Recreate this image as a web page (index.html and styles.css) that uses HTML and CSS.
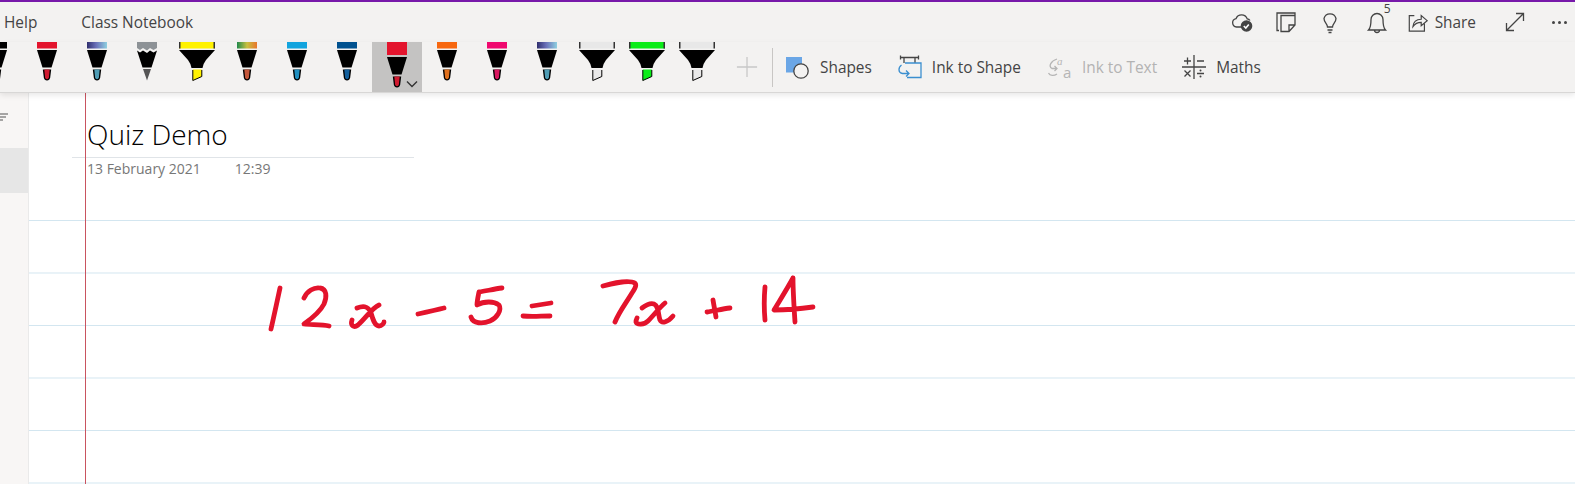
FILE: index.html
```html
<!DOCTYPE html>
<html>
<head>
	<meta charset="utf-8">
	<title>Quiz Demo - OneNote</title>
	<link rel="stylesheet" href="styles.css">
</head>
<body>
	<svg class="defs" width="0" height="0">
		<defs>
			<linearGradient id="grad-galaxy"><stop offset="0" stop-color="#2f2f6e"/><stop offset="0.45" stop-color="#6a6fb8"/><stop offset="1" stop-color="#8fd0e0"/></linearGradient>
			<linearGradient id="grad-rainbow"><stop offset="0" stop-color="#1f8a4c"/><stop offset="0.5" stop-color="#c8c040"/><stop offset="1" stop-color="#e8762c"/></linearGradient>
			<symbol id="pen" viewBox="0 0 50 50">
				<rect class="cap" x="15" y="0" width="20" height="6.5"/>
				<path d="M15 8H35L29.5 25.5H20.5Z"/>
				<path d="M20.8 27.5H29.2L28.2 35.5Q27.6 38.500 25 38.500T21.800 35.500Z"/>
				<path class="tip" d="M22.300 27.500H27.700L26.900 35.500Q26.500 37.200 25 37.200T23.100 35.500Z"/>
			</symbol>
			<symbol id="pen-big" viewBox="0 0 50 50">
				<rect class="cap" x="15" y="0" width="20" height="13"/>
				<path d="M15 15H35L29.5 32.5H20.5Z"/>
				<path d="M20.8 34.5H29.2L28.2 42.5Q27.6 45.5 25 45.5T21.8 42.5Z"/>
				<path class="tip" d="M22.300 34.500H27.700L26.900 42.500Q26.500 44.200 25 44.200T23.100 42.500Z"/>
			</symbol>
			<symbol id="marker" viewBox="0 0 50 50">
				<rect class="cap" x="7" y="0" width="36" height="6.5"/>
				<path fill="#333" d="M7 0h1.500v6.500H7zM41.500 0H43v6.500h-1.500z"/>
				<path d="M7 8H43L34 18Q31 22 30.500 26H19.500Q19 22 16 18Z"/>
				<path class="tip" d="M20.800 27.500H29.800V34.500L20.800 38.500Z"/>
				<path fill="none" stroke="#000" stroke-width="1" d="M20.800 28V38.500L29.800 34.500V28"/>
			</symbol>
			<symbol id="pencil" viewBox="0 0 50 50">
				<path fill="#8d9296" d="M15 0H35V6L31.500 8 28 6 25 8.500 21 6 18 8 15 6Z"/>
				<path d="M15 8.500L18 10.500 21 8.500 25 11 28 8.500 31.500 10.500 35 8.500 29.500 25.500H20.500Z"/>
				<path fill="#555" d="M21 27H29L25 38.500Z"/>
			</symbol>
		</defs>
	</svg>

	<div class="app">
		<div class="topbar">
			<span class="tab tab-help">Help</span>
			<span class="tab tab-class">Class Notebook</span>
			<div class="actions">
				<svg class="act act-cloud" viewBox="0 0 24 24"><path class="ln" d="M12 17H6.500A4.200 4.200 0 0 1 6 8.700 6 6 0 0 1 17.200 8.800 3.600 3.600 0 0 1 20 10.500"/><circle class="dk" cx="16.500" cy="16" r="5.800"/><path class="wt" d="M13.800 16l2 2 3-3.500"/></svg>
				<svg class="act act-note" viewBox="0 0 24 24"><path class="ln" d="M5 20.500H3V3H21V5M7 5.500H21V15L15 21.500H7ZM21 15H15V21.500"/></svg>
				<svg class="act act-bulb" viewBox="0 0 24 24"><path class="ln" d="M9.500 17C9.500 13.500 6 12.500 6 8.500A6.200 6.200 0 0 1 18 8.500C18 12.500 14.500 13.500 14.500 17ZM9.500 20H14.500M10.500 22.500H13.500"/></svg>
				<div class="act act-bell">
					<svg viewBox="0 0 24 24"><path class="ln" d="M3.500 20H20.500C18.500 18 18 15 18 9.500A6 6 0 0 0 6 9.500C6 15 5.500 18 3.500 20ZM9.500 20A2.500 2.500 0 0 0 14.500 20"/></svg>
					<span class="badge">5</span>
				</div>
				<div class="share">
					<svg viewBox="0 0 24 24"><path class="ln" d="M8 5H2.500V22H19V14M6.500 17C7 11.500 10.500 9 15.500 9V5L22 10.500 15.500 16V12.500C12 12.500 9 13.500 6.500 17Z"/></svg>
					<span>Share</span>
				</div>
				<svg class="act act-expand" viewBox="0 0 24 24"><path class="ln" d="M4 20L20 4M13 3.500H20.500V11M3.500 13V20.500H11"/></svg>
				<div class="dots"><i></i><i></i><i></i></div>
			</div>
		</div>

		<div class="ribbon">
			<div class="pens">
				<div class="pen pen-black"><svg><use href="#pen"/></svg></div>
				<div class="pen pen-red"><svg><use href="#pen"/></svg></div>
				<div class="pen pen-galaxy"><svg><use href="#pen"/></svg></div>
				<div class="pen"><svg><use href="#pencil"/></svg></div>
				<div class="pen pen-yellow"><svg><use href="#marker"/></svg></div>
				<div class="pen pen-rainbow"><svg><use href="#pen"/></svg></div>
				<div class="pen pen-sky"><svg><use href="#pen"/></svg></div>
				<div class="pen pen-navy"><svg><use href="#pen"/></svg></div>
				<div class="pen pen-red selected">
					<svg><use href="#pen-big"/></svg>
					<svg class="chevron" viewBox="0 0 12 8"><path d="M1 1.500L6 6.500 11 1.500"/></svg>
				</div>
				<div class="pen pen-orange"><svg><use href="#pen"/></svg></div>
				<div class="pen pen-pink"><svg><use href="#pen"/></svg></div>
				<div class="pen pen-galaxy"><svg><use href="#pen"/></svg></div>
				<div class="pen pen-pale"><svg><use href="#marker"/></svg></div>
				<div class="pen pen-green"><svg><use href="#marker"/></svg></div>
				<div class="pen pen-pale"><svg><use href="#marker"/></svg></div>
			</div>
			<div class="add"><svg viewBox="0 0 24 24"><path d="M12 1V23M1 12H23"/></svg></div>
			<div class="sep"></div>
			<div class="tool tool-shapes">
				<svg viewBox="0 0 24 24"><rect x="0" y="2" width="16" height="15.500" fill="#6aa6e6"/><circle class="disc" cx="15" cy="16" r="7.200"/></svg>
				<span>Shapes</span>
			</div>
			<div class="tool tool-ink">
				<svg viewBox="0 0 24 24"><path class="ln" d="M3 2.500H20M2.500 0.500V4.500M20.500 0.500V4.500M6 3V8M17 3V8"/><path class="bl" d="M7 8H23V22.500H9M3.500 10C0 12.500 0 18 4.500 18.500H11M8 15.500L11 18.500 8 21.500"/></svg>
				<span>Ink to Shape</span>
			</div>
			<div class="tool tool-off">
				<svg viewBox="0 0 24 24"><text class="a-top" x="9" y="10">a</text><text class="a-low" x="15" y="23">a</text><path class="gr" d="M9 4C3 6 0 11 4 13.500H9M6.500 11L9 13.500 6.500 16"/><path class="gr" d="M0.500 18C2 21 6 21 9 19"/></svg>
				<span>Ink to Text</span>
			</div>
			<div class="tool tool-maths">
				<svg viewBox="0 0 24 24"><path class="ln" d="M12 0V24M0 12H24M2 6H9M5.500 2.500V9.500M15 6H22M2.500 15.500L8.500 21.500M8.500 15.500L2.500 21.500M15 18.500H22"/><circle cx="18.500" cy="15.500" r="1" fill="#444"/><circle cx="18.500" cy="21.500" r="1" fill="#444"/></svg>
				<span>Maths</span>
			</div>
		</div>

		<div class="main">
			<div class="side">
				<svg class="sort" viewBox="0 0 10 9"><path d="M0 1H8M0 4H6M0 7H3"/></svg>
				<div class="side-item"></div>
			</div>
			<div class="page">
				<div class="page-head">
					<h1>Quiz Demo</h1>
					<div class="meta"><span>13 February 2021</span><span>12:39</span></div>
				</div>
				<div class="ruled"></div>
				<div class="margin-line"></div>
				<svg class="ink" viewBox="29 92 900 300">
					<path d="M280 288C277 302 274 316 271 329"/>
					<path d="M304 298C307 291 314 287 320 288 327 289 327 297 324 304 320 312 311 319 304 324 310 325 322 324 329 326"/>
					<path d="M357 308C362 306 368 305 371 313 373 320 375 326 379 326 382 326 384 323 384 322M379 305C372 308 366 318 358 325 354 328 350 326 352 320"/>
					<path d="M418 314C427 312 436 310 444 308"/>
					<path d="M502 288C494 289 486 291 479 292 478 297 477 301 477 305 484 301 494 301 499 305 502 310 497 318 490 321 483 324 473 324 471 317"/>
					<path d="M532 306C538 305 545 304 551 303M523 316C532 317 541 316 550 316"/>
					<path d="M603 286C613 283 626 281 632 282 638 283 636 287 632 293 626 303 619 312 615 322"/>
					<path d="M642 308C646 305 651 303 654 304 659 306 658 315 660 320 662 324 668 322 673 316M665 303C660 307 654 315 648 321 644 325 637 325 636 322 636 320 637 318 637 318"/>
					<path d="M707 312C714 311 722 309 730 308M713 300C714 306 715 311 716 317"/>
					<path d="M765 287C764 298 764 309 765 320"/>
					<path d="M793 278C787 289 780 300 774 310 786 310 799 309 813 307M793 278C793 292 794 307 795 322"/>
				</svg>
			</div>
		</div>
	</div>
</body>
</html>
```

FILE: styles.css
```css
html, body{margin: 0;height: 100%;overflow: hidden;background: #fff;}
body{font-family: "Open Sans", sans-serif;color: #444;}
svg{display: block;}
.defs{position: absolute;}
.app{display: flex;flex-direction: column;height: 484px;overflow: hidden;}

.ln, .bl, .gr, .wt{fill: none;stroke: #444;stroke-width: 1.3;}
.bl{stroke: #3b8fd0;}
.gr{stroke: #b5b5b5;}
.wt{stroke: #fff;stroke-width: 1.600;}
.dk{fill: #444;}
.disc{fill: #f3f2f1;stroke: #444;stroke-width: 1.3;}

/* top row */
.topbar{display: flex;align-items: center;flex: none;height: 40px;border-top: 2px solid #7719aa;background: #f3f2f1;font-size: 15.4px;}
.tab-help{margin-left: 4px;}
.tab-class{margin-left: 44px;}
.actions{display: flex;align-items: center;margin-left: auto;}
.act{width: 24px;height: 24px;flex: none;}
.act-cloud{margin-right: 20px;}
.act-note{margin-right: 20px;}
.act-bulb{margin-right: 23px;}
.act-bell{position: relative;margin-right: 18px;}
.badge{position: absolute;left: 19px;top: -10px;font-size: 12px;}
.share{display: flex;align-items: center;gap: 6px;margin-right: 27px;}
.share svg{width: 22px;height: 22px;}
.act-expand{margin-right: 25px;}
.dots{display: flex;gap: 3px;margin-right: 8px;}
.dots i{width: 3px;height: 3px;border-radius: 50%;background: #444;}

/* ribbon */
.ribbon{display: flex;flex: none;height: 50px;background: #f3f2f1;box-shadow: 0 1px 0 #d8d7d6, 0 3px 6px rgba(0,0,0,.1);position: relative;z-index: 2;font-size: 15.4px;}
.pens{display: flex;margin-left: -28px;}
.pen{position: relative;width: 50px;height: 50px;flex: none;}
.pen svg{width: 50px;height: 50px;}
.cap{fill: var(--cap, #000);}
.tip{fill: var(--tip, #000);}
.pen-black{--cap: #000;--tip: #fff;}
.pen-red{--cap: #e3142d;--tip: #d01a30;}
.pen-galaxy{--cap: url(#grad-galaxy);--tip: #4f9db5;}
.pen-yellow{--cap: #fff200;--tip: #fff200;}
.pen-rainbow{--cap: url(#grad-rainbow);--tip: #c4573a;}
.pen-sky{--cap: #12a4de;--tip: #1f8fc0;}
.pen-navy{--cap: #00518f;--tip: #125f9c;}
.pen-orange{--cap: #f7670f;--tip: #e0701c;}
.pen-pink{--cap: #f0086f;--tip: #d9165f;}
.pen-pale{--cap: #e8e8e8;--tip: #e8e8e8;}
.pen-green{--cap: #0bec18;--tip: #0bec18;}
.selected{background: #c4c3c2;}
.pen .chevron{position: absolute;left: 34px;top: 38px;width: 12px;height: 8px;fill: none;stroke: #333;stroke-width: 1.400;}
.add{display: flex;align-items: center;justify-content: center;width: 50px;flex: none;}
.add svg{width: 22px;height: 22px;fill: none;stroke: #c8c8c8;stroke-width: 1.400;}
.sep{width: 1px;margin: 6px 0 5px;background: #c8c6c4;flex: none;}
.tool{display: flex;align-items: center;gap: 10px;margin-left: 27px;}
.tool svg{width: 24px;height: 24px;flex: none;overflow: visible;}
.tool-shapes{margin-left: 13px;}
.tool-ink{margin-left: 26px;}
.tool-maths{margin-left: 25px;}
.tool-off{color: #b3b3b3;}
.a-top{font: italic 11px "Liberation Serif", serif;fill: #b5b5b5;}
.a-low{font: 15px "Open Sans", sans-serif;fill: #b5b5b5;}

/* note area */
.main{display: flex;flex: 1;min-height: 0;}
.side{width: 28px;flex: none;background: #f8f6f5;border-right: 1px solid #eaeaea;overflow: hidden;}
.sort{width: 10px;height: 9px;margin: 21px 0 0 0;fill: none;stroke: #555;stroke-width: 1;}
.side-item{height: 45px;margin-top: 26px;background: #e6e6e6;}
.page{position: relative;flex: 1;display: flex;flex-direction: column;min-width: 0;}
.page-head{height: 128px;flex: none;box-sizing: border-box;padding-top: 23px;}
.page-head h1{width: 342px;margin: 0 0 0 43px;padding: 0 0 0 15px;box-sizing: border-box;height: 43px;font-size: 28px;line-height: 38px;font-weight: 300;color: #000;border-bottom: 1px solid #e0e4e8;}
.meta{display: flex;gap: 34px;margin: 1px 0 0 58px;font-size: 14px;color: #777;}
.ruled{flex: 1;background-image: linear-gradient(#d3e6f0 1px, transparent 1px);background-size: 100% 52.5px;}
.margin-line{position: absolute;left: 56px;top: 0;bottom: 0;width: 1px;background: #c9535f;}
.ink{position: absolute;left: 0;top: 0;width: 900px;height: 300px;fill: none;stroke: #e3132c;stroke-width: 4.800;stroke-linecap: round;stroke-linejoin: round;}
```
